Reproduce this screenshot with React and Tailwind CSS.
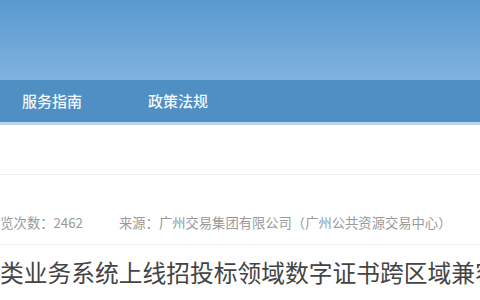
import React from "react";

const NavItem = ({ label, className }) => (
  <span className={`text-[15px] font-medium text-white/95 ${className}`}>{label}</span>
);

export default function App() {
  return (
    <div className="w-[480px] h-[300px] overflow-hidden bg-white font-['Noto_Sans_CJK_SC',sans-serif]">
      <div className="h-[80px] bg-gradient-to-b from-[#5899d1] to-[#80b3dc]" />
      <div className="h-[42px] bg-[#4f8fc4] flex items-center">
        <NavItem label="服务指南" className="ml-[22px]" />
        <NavItem label="政策法规" className="ml-[66px]" />
      </div>
      <div className="h-[3px] bg-[#b9d4ec]" />
      <div className="h-[49px]" />
      <div className="border-t border-[#eeeeee] h-[70px] flex items-center pt-[27px] text-[13.3px] text-[#999999] whitespace-nowrap">
        <span className="-ml-[13px]">浏览次数：2462</span>
        <span className="ml-[36px]">来源：广州交易集团有限公司（广州公共资源交易中心）</span>
      </div>
      <div className="border-t border-[#eeeeee] pt-[11px] whitespace-nowrap text-[23.75px] leading-[32px] text-[#444444]">
        <span className="-ml-[23.75px] inline-block">多类业务系统上线招投标领域数字证书跨区域兼容互认</span>
      </div>
    </div>
  );
}
